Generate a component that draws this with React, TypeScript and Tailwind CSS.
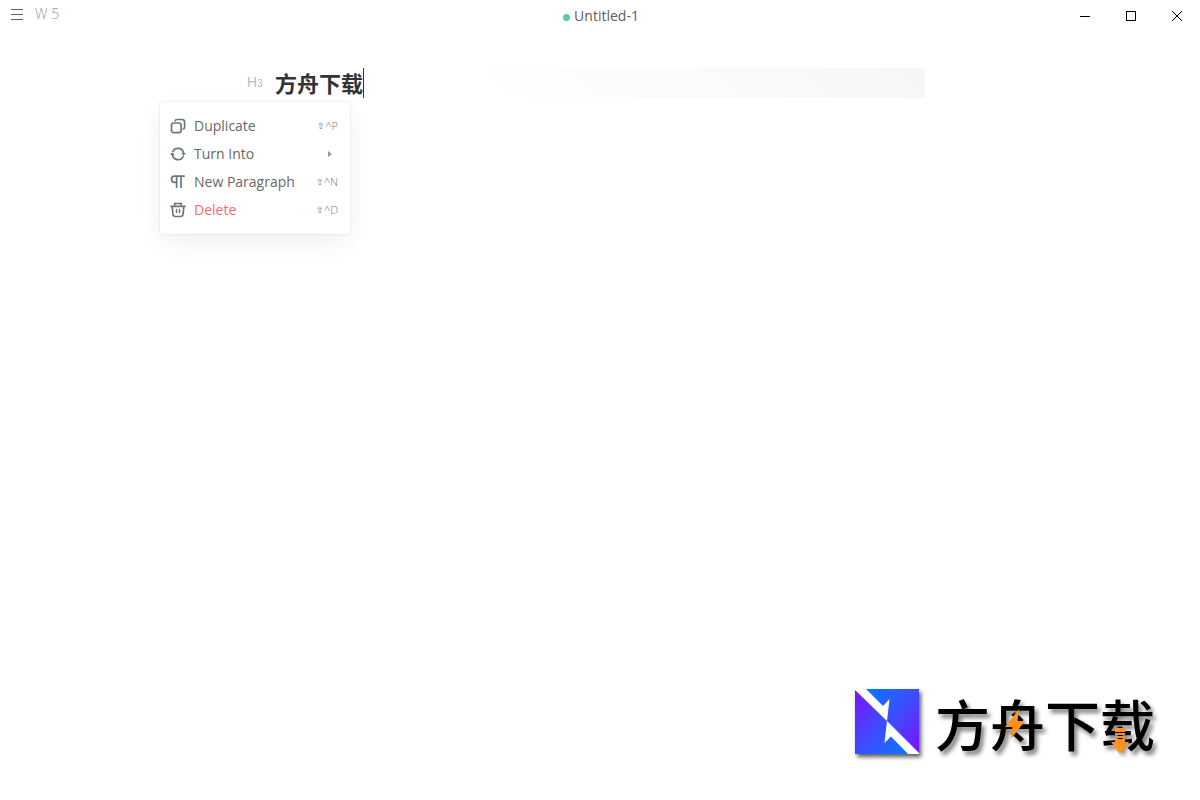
import type { ReactNode } from 'react';

function DuplicateIcon() {
  return (
    <svg viewBox="0 0 16 16" className="size-4" fill="none" stroke="currentColor" strokeWidth="1.7" aria-hidden="true">
      <rect x="1.5" y="5" width="9.6" height="9.6" rx="2.2" />
      <path d="M5 2.8 Q5.4 1.5 7 1.5 H12 Q14.6 1.5 14.6 4.1 V9 Q14.6 10.7 13.3 11" strokeLinecap="round" />
    </svg>
  );
}

function TurnIcon() {
  return (
    <svg viewBox="0 0 16 16" className="size-4" fill="none" stroke="currentColor" strokeWidth="1.7" aria-hidden="true">
      <path d="M2.6 6 A5.7 5.7 0 0 1 13.6 7.4 M13.4 10 A5.7 5.7 0 0 1 2.4 8.6" />
      <path d="M11.2 7 H16 L13.6 9.8 Z M0 9 H4.8 L2.4 6.2 Z" fill="currentColor" stroke="none" />
    </svg>
  );
}

function ParagraphIcon() {
  return (
    <svg viewBox="0 0 16 16" className="size-4" fill="none" stroke="currentColor" strokeWidth="1.7" aria-hidden="true">
      <path d="M14.8 2.2 H4.6 A3.1 3.1 0 0 0 4.6 8.4 H6.6 M6.6 2.2 V14 M11 2.2 V14" />
    </svg>
  );
}

function TrashIcon() {
  return (
    <svg viewBox="0 0 16 16" className="size-4" fill="none" stroke="currentColor" strokeWidth="1.7" strokeLinecap="round" aria-hidden="true">
      <path d="M1 4.3 H15 M4.6 1.5 H11.4 M2.2 4.6 L2.9 12 Q3.2 14.5 5.5 14.5 H10.5 Q12.8 14.5 13.1 12 L13.8 4.6" />
      <path d="M4.4 4 Q4.6 2 5.6 1.5 M11.6 4 Q11.4 2 10.4 1.5 M6.5 7.5 V10.4 M9.5 7.5 V10.4" strokeWidth="1.5" />
    </svg>
  );
}

function Shortcut({ letter }: { letter: string }) {
  return (
    <span className="flex items-center">
      <span className="font-['DejaVu_Sans',sans-serif] text-[9px]">⇧</span>^{letter}
    </span>
  );
}

type ItemProps = { icon: ReactNode; label: string; hint: ReactNode; danger?: boolean };

function MenuItem({ icon, label, hint, danger }: ItemProps) {
  return (
    <li role="none">
      <button
        type="button"
        role="menuitem"
        className="flex h-7 w-full items-center gap-2 pr-3 pl-2.5 text-left text-sm hover:bg-gray-50"
      >
        <span className="text-[#6b7681]">{icon}</span>
        <span className={danger ? 'flex-1 text-[#ff6969]' : 'flex-1 text-[#686868]'}>{label}</span>
        <span className="text-[11px] font-light text-[#777]">{hint}</span>
      </button>
    </li>
  );
}

function BlockMenu() {
  return (
    <ul
      role="menu"
      className="absolute top-[34px] -left-[115px] w-[190px] rounded-xs bg-white py-2.5 shadow-[0_0_2px_rgba(0,0,0,0.16),0_8px_24px_rgba(0,0,0,0.06)]"
    >
      <MenuItem icon={<DuplicateIcon />} label="Duplicate" hint={<Shortcut letter="P" />} />
      <MenuItem
        icon={<TurnIcon />}
        label="Turn Into"
        hint={
          <svg viewBox="0 0 4 6" className="mr-1.5 h-1.5 w-1" fill="#999" aria-hidden="true">
            <path d="M0 0 L4 3 L0 6 Z" />
          </svg>
        }
      />
      <MenuItem icon={<ParagraphIcon />} label="New Paragraph" hint={<Shortcut letter="N" />} />
      <MenuItem icon={<TrashIcon />} label="Delete" hint={<Shortcut letter="D" />} danger />
    </ul>
  );
}

function TitleBar() {
  return (
    <header className="grid h-8 grid-cols-3 text-sm">
      <div className="flex h-7 items-center gap-3 pl-[11px]">
        <button type="button" aria-label="Menu" className="text-[#606266]">
          <svg viewBox="0 0 12 12" className="size-3" stroke="currentColor" strokeWidth="1" aria-hidden="true">
            <path d="M0 1.5 H12 M0 6.5 H12 M0 11.5 H12" />
          </svg>
        </button>
        <span className="font-light text-[#999]">W 5</span>
      </div>
      <div className="flex h-8 items-center justify-center gap-1 pl-0.5 text-[#606060]">
        <span className="mt-0.5 size-[7px] rounded-full bg-[#5fcc97]" />
        <h1>Untitled-1</h1>
      </div>
      <div className="flex justify-end text-black">
        <button type="button" aria-label="Minimize" className="flex h-8 w-[46px] items-center justify-center">
          <svg viewBox="0 0 10 10" className="size-2.5" fill="currentColor" aria-hidden="true">
            <path d="M0 5 H10 V6 H0 Z" />
          </svg>
        </button>
        <button type="button" aria-label="Maximize" className="flex h-8 w-[46px] items-center justify-center">
          <svg viewBox="0 0 10 10" className="size-2.5" fill="none" stroke="currentColor" aria-hidden="true">
            <rect x="0.5" y="0.5" width="9" height="9" />
          </svg>
        </button>
        <button type="button" aria-label="Close" className="flex h-8 w-[46px] items-center justify-center">
          <svg viewBox="0 0 10 10" className="size-2.5" fill="none" stroke="currentColor" aria-hidden="true">
            <path d="M0 0 L10 10 M10 0 L0 10" />
          </svg>
        </button>
      </div>
    </header>
  );
}

function Brand() {
  return (
    <footer className="mt-auto flex items-center justify-end gap-4 pr-[45px] pb-[46px]">
      <svg viewBox="0 0 64 65" className="h-[65px] w-16 drop-shadow-[2px_3px_2px_rgba(0,0,0,0.65)]" aria-hidden="true">
        <defs>
          <linearGradient id="upper" x1="0" y1="0" x2="1" y2="1">
            <stop offset="0" stopColor="#0878ff" />
            <stop offset="0.5" stopColor="#3e4cff" />
            <stop offset="1" stopColor="#7c12ff" />
          </linearGradient>
          <linearGradient id="lower" x1="0" y1="0" x2="1" y2="1">
            <stop offset="0" stopColor="#7c12ff" />
            <stop offset="0.5" stopColor="#3e4cff" />
            <stop offset="1" stopColor="#0878ff" />
          </linearGradient>
        </defs>
        <rect width="64" height="65" fill="#fff" />
        <path d="M11 0 H64 V64 L32 32 L34.5 10 L28 17 Z" fill="url(#upper)" />
        <path d="M0 1 L32 32 L29.5 54 L36 47.5 L53 65 H0 Z" fill="url(#lower)" />
      </svg>
      <div className="relative">
        <p className="font-['Noto_Sans_CJK_SC',sans-serif] text-[55px] leading-[60px] font-medium text-black [text-shadow:3px_4px_4px_rgba(0,0,0,0.5)]">
          方舟下载
        </p>
        <svg viewBox="0 0 20 30" className="absolute top-[17px] left-[70px] h-[30px] w-5" fill="#ff921e" aria-hidden="true">
          <path d="M14 0 L0 18 H7.5 L6 30 L20 12 H12.5 Z" />
        </svg>
        <svg viewBox="0 0 18 26" className="absolute top-9 left-[176px] h-[26px] w-[18px]" fill="#ff921e" aria-hidden="true">
          <path d="M4 0 H14 V4 H4 Z M4 5 H14 V7 H4 Z M4 8 H14 V10 H4 Z M4 11 H14 V14 H18 L9 26 L0 14 H4 Z" />
        </svg>
      </div>
    </footer>
  );
}

export default function App() {
  return (
    <div className="flex min-h-screen flex-col bg-white font-['Open_Sans','Noto_Sans_CJK_SC',sans-serif]">
      <TitleBar />
      <main className="mx-auto w-full max-w-[650px] pt-9">
        <section className="relative">
          <span className="absolute top-1 -left-7 font-['Liberation_Sans',sans-serif] text-sm leading-5 text-[#bbb]">
            H<span className="text-[10px]">3</span>
          </span>
          <h3 className="flex h-[30px] rounded-xs bg-[linear-gradient(45deg,#fff_30%,#f6f6f6)] text-[22px] leading-[30px] font-bold text-[#333]">
            方舟下载
            <span className="w-px bg-[#333]" />
          </h3>
          <BlockMenu />
        </section>
      </main>
      <Brand />
    </div>
  );
}
